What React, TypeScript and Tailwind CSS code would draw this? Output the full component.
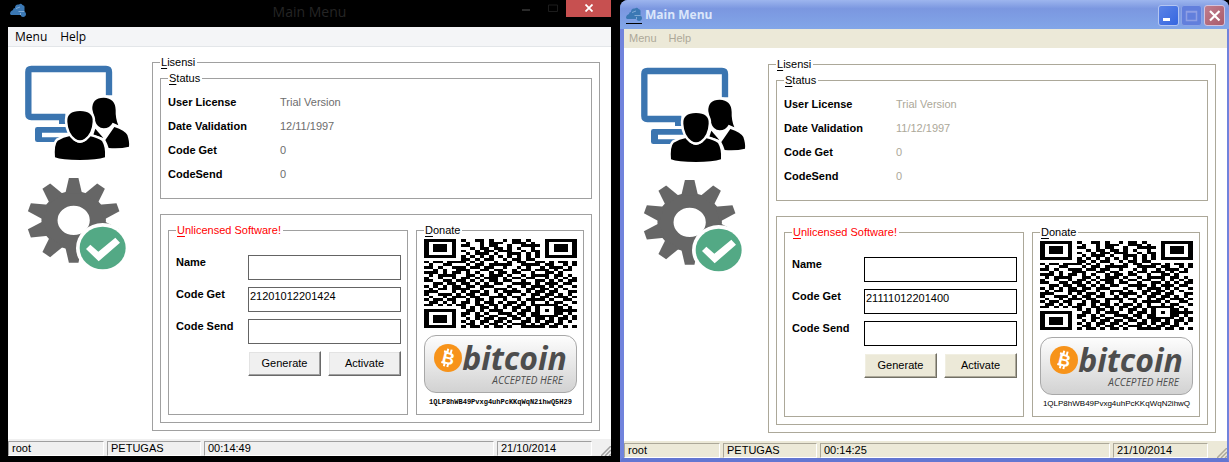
import { useId } from 'react';
import type { ReactNode } from 'react';
import { clsx } from 'clsx';

type Skin = 'flat' | 'luna';

const QR_ROWS = [
  'fe9a5a13f', 'fe4b9d6bf', 'fecb27a3f', 'fe2da943f', 'fe96e5d3f', 'fe5d3a93f', 'feaaaaabf',
  '00d65b400', 'b7a92cd69', '4c5be7b2e', 'd3b64a5d1', '29cd96eb7', 'eb52d9345', '5e6ba5ed2',
  '92d75b2a9', 'cdab64d5e', '36d59ebb3', 'ab6e25d4d', '5bc9d36a6', 'e2b57ad9b', '9d6ca5b54',
  '4bb3d96ed', 'b65a4bd32', '6ad6b52cb', 'd59b6dfa5', '01ad5a8d2', 'fe6b96afb', 'fed4ed8d4',
  'fe9b35fa9', 'fe56dad6e', 'feada6b53', 'fe6b5d6c5', 'feb5a7daa',
];

function inFinder(x: number, y: number) {
  return (x < 8 && y < 8) || (x > 24 && y < 8) || (x < 8 && y > 24);
}

function isDark(x: number, y: number) {
  if (inFinder(x, y)) {
    const fx = x > 24 ? x - 26 : x;
    const fy = y > 24 ? y - 26 : y;
    if (fx < 0 || fy < 0 || fx > 6 || fy > 6) return false;
    const ring = Math.max(Math.abs(fx - 3), Math.abs(fy - 3));
    return ring !== 2;
  }
  return ((parseInt(QR_ROWS[y][x >> 2], 16) >> (3 - (x & 3))) & 1) === 1;
}

const QR_PATH = QR_ROWS.map((_, y) =>
  Array.from({ length: 33 }, (_, x) => (isDark(x, y) ? `M${x} ${y}h1v1h-1z` : '')).join(''),
).join('');

function QrCode() {
  return (
    <svg viewBox="0 0 33 33" preserveAspectRatio="none" shapeRendering="crispEdges" className="block h-[89px] w-full" role="img" aria-label="Donate">
      <path d={QR_PATH} />
    </svg>
  );
}

function CloudLogo() {
  return (
    <svg viewBox="0 0 16 16" className="size-4 shrink-0" fill="#3b78b4" aria-hidden="true">
      <path d="M0 11Q0 8 3 7 3 5 5 5Q5 1 9 1.500Q11 0 12.500 2 15 2.500 14.500 5L14.500 9Q16 9 16 11Q16 13.500 13 14 11 14 10.500 12H1Z" />
      <path d="M8.500 8.500h6M6 5.500l4-1.500M10.500 12v-2" stroke="#9fc0e4" strokeWidth=".7" />
    </svg>
  );
}

function UsersMonitor() {
  return (
    <svg viewBox="45 45 315 288" className="h-24 w-[105px]" aria-hidden="true">
      <path d="M297 136V66Q297 57 288 57H64Q55 57 55 66V192Q55 201 64 201H166" fill="none" stroke="#3b75b0" strokeWidth="19" />
      <path d="M147 205h30v17h-30z" fill="#3b75b0" />
      <path d="M180 231H82q-7 0-7 7v31q0 7 7 7h80v-14H96v-14h84z" fill="#3b75b0" />
      <g stroke="#fff" strokeWidth="15" strokeLinejoin="round" paintOrder="stroke">
        <path d="M247 178Q245 144 281 143Q316 144 317 180Q316 205 325 226L308 218Q299 235 281 235Q262 234 255 212Z" />
        <path d="M256 236L280 264L250 254Z" strokeWidth="4" />
        <path d="M313 231Q345 242 352 255Q359 275 357 290Q330 297 296 294Q292 281 286 270Z" />
        <path d="M135 322Q132 283 143 272Q160 262 180 258Q195 278 210 279Q228 277 238 258Q264 264 276 273Q287 290 285 322Q260 330 210 330Q155 330 135 322Z" />
        <path d="M172 215Q170 183 210 183Q250 183 248 215Q246 250 224 266Q210 275 196 266Q174 250 172 215Z" />
      </g>
    </svg>
  );
}

const TEETH = [0, 36, 72, 108, 144, 180, 216, 252, 288, 324];

function GearCheck() {
  return (
    <svg viewBox="45 381 315 279" className="h-[93px] w-[105px]" aria-hidden="true">
      <g transform="translate(191 511) scale(1.1 1)" fill="#666">
        <circle r="66" fill="none" stroke="#666" strokeWidth="44" />
        {TEETH.map((angle) => (
          <path key={angle} d="M-23 -80L-13 -127H13L23 -80Z" transform={`rotate(${angle})`} />
        ))}
      </g>
      <ellipse cx="278" cy="594" rx="80" ry="75" fill="#fff" />
      <ellipse cx="278" cy="594" rx="69" ry="64" fill="#53a985" />
      <path d="M228 597L241 584L265 605L316 563L330 578L266 634Z" fill="#fff" />
    </svg>
  );
}

function BitcoinBadge() {
  return (
    <div className="flex h-[58px] items-start justify-center rounded-xl border border-[#a8a8a8] bg-linear-to-b from-[#fdfdfd] to-[#d2d2d2] pt-2">
      <svg viewBox="0 0 28 28" className="size-7 shrink-0" aria-hidden="true">
        <circle cx="14" cy="14" r="14" fill="#f7931a" />
        <g transform="rotate(14 14 14)">
          <path d="M12 5v4M15.500 5v4M12 19v4M15.500 19v4M8.500 8.500h4M8.500 19.500h4" stroke="#fff" strokeWidth="2" />
          <text x="14.500" y="20" textAnchor="middle" fill="#fff" fontFamily="Liberation Sans, sans-serif" fontWeight="700" fontSize="17">B</text>
        </g>
      </svg>
      <div className="flex flex-col items-end font-['Open_Sans',sans-serif] text-[#4d4d4d] italic">
        <span className="text-[32px] leading-7 font-bold">bitcoin</span>
        <span className="pr-1 text-[10px] leading-4">ACCEPTED HERE</span>
      </div>
    </div>
  );
}

function Caption({ text }: { text: string }) {
  return (
    <>
      <span className="underline underline-offset-2">{text[0]}</span>
      {text.slice(1)}
    </>
  );
}

function Group({ title, skin, danger, className, children }: { title: string; skin: Skin; danger?: boolean; className?: string; children: ReactNode }) {
  return (
    <fieldset className={clsx('min-w-0 border pl-[7px]', skin === 'flat' ? 'border-[#a0a0a0]' : 'border-[#aca899]', className)}>
      <legend className={clsx('px-px pr-0.5 leading-4', danger && 'text-[#f00]')}>
        <Caption text={title} />
      </legend>
      {children}
    </fieldset>
  );
}

function Field({ label, value, skin }: { label: string; value: string; skin: Skin }) {
  const id = useId();
  return (
    <>
      <label htmlFor={id} className="leading-[14px] font-bold">{label}</label>
      <input
        id={id}
        defaultValue={value}
        className={clsx('h-[25px] w-full min-w-0 border bg-white pb-2 pl-px outline-none', skin === 'flat' ? 'border-[#646464]' : 'border-black')}
      />
    </>
  );
}

function PushButton({ skin, children }: { skin: Skin; children: ReactNode }) {
  return (
    <button
      type="button"
      className={clsx(
        'h-[25px] border border-t-white border-l-white',
        skin === 'flat'
          ? 'border-r-[#696969] border-b-[#696969] bg-[#f0f0f0] shadow-[inset_-1px_-1px_#a0a0a0,inset_1px_1px_#e3e3e3]'
          : 'border-r-[#716f64] border-b-[#716f64] bg-[#ece9d8] shadow-[inset_-1px_-1px_#aca899,inset_1px_1px_#f1efe2]',
      )}
    >
      {children}
    </button>
  );
}

function LicensePanel({ skin, status, code, address }: { skin: Skin; status: [string, string][]; code: string; address: string }) {
  return (
    <main className="flex bg-white pt-[7px] pr-[11px] pb-2 text-[11px] text-black">
      <div className="flex w-36 shrink-0 flex-col gap-4 pt-[11px] pl-[17px]">
        <UsersMonitor />
        <GearCheck />
      </div>
      <Group title="Lisensi" skin={skin} className="flex-1 pr-[7px] pb-[7px]">
        <Group title="Status" skin={skin} className="pr-[7px] pb-3">
          <dl className="grid grid-cols-[112px_1fr] pt-1 leading-6">
            {status.map(([term, value]) => (
              <div key={term} className="contents">
                <dt className="font-bold">{term}</dt>
                <dd className={skin === 'flat' ? 'text-[#6d6d6d]' : 'text-[#aca899]'}>{value}</dd>
              </div>
            ))}
          </dl>
        </Group>
        <div className={clsx('mt-[15px] flex gap-2 border p-[7px]', skin === 'flat' ? 'border-[#a0a0a0]' : 'border-[#aca899]')}>
          <Group title="Unlicensed Software!" skin={skin} danger className="flex-1 pr-1.5">
            <form className="grid grid-cols-[72px_1fr] gap-y-[7px] pt-[17px]" onSubmit={(event) => event.preventDefault()}>
              <Field label="Name" value="" skin={skin} />
              <Field label="Code Get" value={code} skin={skin} />
              <Field label="Code Send" value="" skin={skin} />
              <div className="col-start-2 grid grid-cols-2 gap-[7px]">
                <PushButton skin={skin}>Generate</PushButton>
                <PushButton skin={skin}>Activate</PushButton>
              </div>
            </form>
          </Group>
          <Group title="Donate" skin={skin} className="w-[168px] shrink-0 pr-1.5 pb-[5px]">
            <div className="flex flex-col pt-px">
              <QrCode />
              <div className="pt-[7px]">
                <BitcoinBadge />
              </div>
              <p
                className={clsx(
                  'pt-0.5 text-center leading-[14px] whitespace-nowrap',
                  skin === 'flat' ? "font-['Liberation_Mono',monospace] text-[7px] font-bold" : 'text-[8px]',
                )}
              >
                {address}
              </p>
            </div>
          </Group>
        </div>
      </Group>
    </main>
  );
}

function StatusBar({ skin, cells }: { skin: Skin; cells: string[] }) {
  return (
    <footer
      className={clsx(
        'grid h-[17px] grid-cols-[96px_94px_1fr_95px_16px] gap-x-[3px] pt-0.5 text-[11px] leading-[13px] text-black',
        skin === 'flat' ? 'bg-[#f0f0f0]' : 'bg-[#ece9d8]',
      )}
    >
      {cells.map((cell) => (
        <span
          key={cell}
          className={clsx('border border-r-white border-b-white pl-[3px]', skin === 'flat' ? 'border-t-[#a0a0a0] border-l-[#a0a0a0]' : 'border-t-[#aca899] border-l-[#aca899]')}
        >
          {cell}
        </span>
      ))}
      <svg viewBox="0 0 10 10" className="size-2.5 self-end justify-self-end" aria-hidden="true">
        <path d="M0 10L10 0M4 10L10 4M8 10L10 8" stroke={skin === 'flat' ? '#a0a0a0' : '#aca899'} strokeWidth="1.500" />
      </svg>
    </footer>
  );
}

function FlatWindow() {
  return (
    <section className="bg-black pr-[9px] pb-1.5 pl-2 font-['Liberation_Sans',Arial,sans-serif]">
      <header className="grid h-[27px] grid-cols-[1fr_auto_1fr] items-start">
        <div className="pt-[3px] pl-0.5">
          <CloudLogo />
        </div>
        <h1 className="font-['Open_Sans',sans-serif] text-[14px] leading-6 text-[#252525]">Main Menu</h1>
        <div className="flex justify-end">
          <button type="button" aria-label="Minimize" className="flex h-[17px] w-[26px] items-center justify-center">
            <svg viewBox="0 0 8 8" className="size-2" aria-hidden="true"><path d="M0 4h8v2H0z" fill="#2a2a2a" /></svg>
          </button>
          <button type="button" aria-label="Maximize" className="flex h-[17px] w-[27px] items-center justify-center pb-0.5">
            <svg viewBox="0 0 10 8" className="h-2 w-2.5" aria-hidden="true"><path d="M.5 1h9v6.500h-9z" fill="none" stroke="#1c1c1c" /></svg>
          </button>
          <button type="button" aria-label="Close" className="flex h-[17px] w-[45px] items-center justify-center bg-[#c75050] pb-0.5">
            <svg viewBox="0 0 8 8" className="size-2" aria-hidden="true"><path d="M.5 .5l7 7M7.500 .5l-7 7" stroke="#fff" strokeWidth="1.800" /></svg>
          </button>
        </div>
      </header>
      <nav className="flex h-5 gap-[13px] border-b border-[#e3e6e9] bg-[#f4f5f7] pl-[7px] font-['Open_Sans',sans-serif] text-[12px] leading-5 text-black">
        <button type="button">Menu</button>
        <button type="button">Help</button>
      </nav>
      <LicensePanel
        skin="flat"
        status={[['User License', 'Trial Version'], ['Date Validation', '12/11/1997'], ['Code Get', '0'], ['CodeSend', '0']]}
        code="21201012201424"
        address="1QLP8hWB49Pvxg4uhPcKKqWqN2ihwQ5H29"
      />
      <StatusBar skin="flat" cells={['root', 'PETUGAS', '00:14:49', '21/10/2014']} />
    </section>
  );
}

function LunaWindow() {
  return (
    <section className="rounded-t-lg bg-[#7183dc] font-['Liberation_Sans',Arial,sans-serif]">
      <header className="flex h-[29px] items-center rounded-t-lg bg-linear-to-b from-[#9db5ee] via-[#7b97e0] via-30% to-[#82a6e8] pt-px pr-1 pl-1.5">
        <div className="border-b border-black">
          <CloudLogo />
        </div>
        <h1 className="flex-1 pl-[3px] font-['Open_Sans',sans-serif] text-[12px] leading-5 font-bold text-[#dbe6fa]">Main Menu</h1>
        <div className="flex gap-0.5">
          <button type="button" aria-label="Minimize" className="size-[21px] rounded-[3px] border border-[#b4c6f2] bg-linear-to-br from-[#5b83e6] to-[#3566e0]">
            <svg viewBox="0 0 19 19" className="size-full" aria-hidden="true"><path d="M4 12h7v3H4z" fill="#fff" /></svg>
          </button>
          <button type="button" aria-label="Maximize" disabled className="size-[21px] rounded-[3px] border border-[#8ba4e6] bg-[#627fdc]">
            <svg viewBox="0 0 19 19" className="size-full" aria-hidden="true"><path d="M4.500 5.500h10v9h-10zM4 6h11" fill="none" stroke="#8e9fe4" strokeWidth="1.500" /></svg>
          </button>
          <button type="button" aria-label="Close" className="size-[21px] rounded-[3px] border border-[#d3c4dd] bg-linear-to-br from-[#c07d8d] to-[#a95b6c]">
            <svg viewBox="0 0 19 19" className="size-full" aria-hidden="true"><path d="M5 5l9.500 9.500M14.500 5L5 14.500" stroke="#fff" strokeWidth="2.200" /></svg>
          </button>
        </div>
      </header>
      <div className="border-x-2 border-x-[#7183dc] border-b-4 border-b-[#6376d2] pl-0.5">
        <nav className="flex h-5 gap-3 border-b border-white bg-[#ece9d8] pl-[5px] text-[11px] leading-[19px] text-[#aca899]">
          <button type="button" disabled>Menu</button>
          <button type="button" disabled>Help</button>
        </nav>
        <LicensePanel
          skin="luna"
          status={[['User License', 'Trial Version'], ['Date Validation', '11/12/1997'], ['Code Get', '0'], ['CodeSend', '0']]}
          code="21111012201400"
          address="1QLP8hWB49Pvxg4uhPcKKqWqN2ihwQ"
        />
        <StatusBar skin="luna" cells={['root', 'PETUGAS', '00:14:25', '21/10/2014']} />
      </div>
    </section>
  );
}

export default function App() {
  return (
    <div className="grid grid-cols-[620fr_609fr] bg-black">
      <FlatWindow />
      <LunaWindow />
    </div>
  );
}
